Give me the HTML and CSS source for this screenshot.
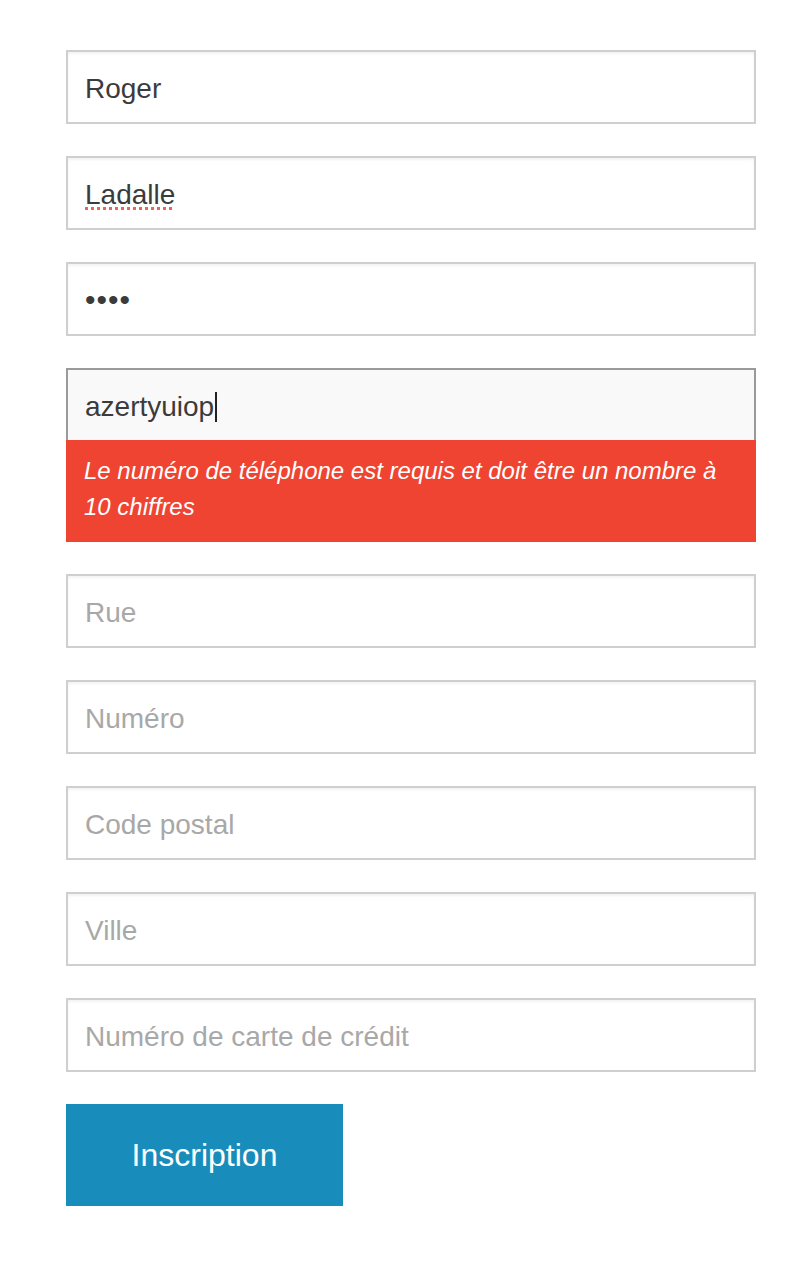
FILE: index.html
```html
<!DOCTYPE html>
<html lang="fr">
<head>
<meta charset="utf-8">
<title>Inscription</title>
<link rel="stylesheet" href="styles.css">
</head>
<body>
<form class="form">
  <div class="field"><span class="value">Roger</span></div>
  <div class="field"><span class="value misspelled">Ladalle</span></div>
  <div class="field"><span class="value dots">••••</span></div>
  <div class="group">
    <div class="field focused"><span class="value">azertyuiop</span><span class="caret"></span></div>
    <div class="error">Le numéro de téléphone est requis et doit être un nombre à 10 chiffres</div>
  </div>
  <div class="field"><span class="placeholder">Rue</span></div>
  <div class="field"><span class="placeholder">Numéro</span></div>
  <div class="field"><span class="placeholder">Code postal</span></div>
  <div class="field"><span class="placeholder">Ville</span></div>
  <div class="field"><span class="placeholder">Numéro de carte de crédit</span></div>
  <div class="actions"><button type="button" class="btn">Inscription</button></div>
</form>
</body>
</html>
```
FILE: styles.css
```css
html, body {
  margin: 0;
  padding: 0;
  background: #ffffff;
}
body {
  font-family: "Liberation Sans", Arial, sans-serif;
}
.form {
  display: flex;
  flex-direction: column;
  gap: 32px;
  width: 690px;
  margin: 50px 0 0 66px;
}
.field {
  box-sizing: border-box;
  height: 74px;
  border: 2px solid #cfcfcf;
  background: #ffffff;
  box-shadow: inset 0 2px 3px rgba(0, 0, 0, 0.05);
  display: flex;
  align-items: center;
  padding: 0 17px;
  font-size: 28px;
  color: #3b3b3b;
}
.value {
  line-height: 1;
  padding-top: 4px;
}
.misspelled {
  text-decoration: underline dotted #f0615a;
  text-decoration-thickness: 3px;
  text-underline-offset: 3px;
}
.dots {
  font-size: 30px;
  letter-spacing: 1px;
  padding-top: 2px;
}
.placeholder {
  color: #a8a8a8;
  line-height: 1;
  padding-top: 4px;
}
.group {
  display: flex;
  flex-direction: column;
}
.field.focused {
  height: 72px;
  border-color: #9a9a9a;
  border-bottom: none;
  background: #f9f9f9;
  box-shadow: none;
}
.caret {
  display: inline-block;
  width: 2px;
  height: 30px;
  background: #222;
  margin-left: 1px;
  margin-top: 4px;
}
.error {
  box-sizing: border-box;
  background: #ef4431;
  color: #ffffff;
  font-style: italic;
  font-size: 24px;
  line-height: 36px;
  padding: 13px 17px 17px 18px;
  min-height: 102px;
}
.actions {
  display: flex;
}
.btn {
  width: 277px;
  height: 102px;
  border: none;
  background: #188dbb;
  color: #ffffff;
  font-family: "Liberation Sans", Arial, sans-serif;
  font-size: 32px;
  padding: 0;
  cursor: pointer;
}
```
